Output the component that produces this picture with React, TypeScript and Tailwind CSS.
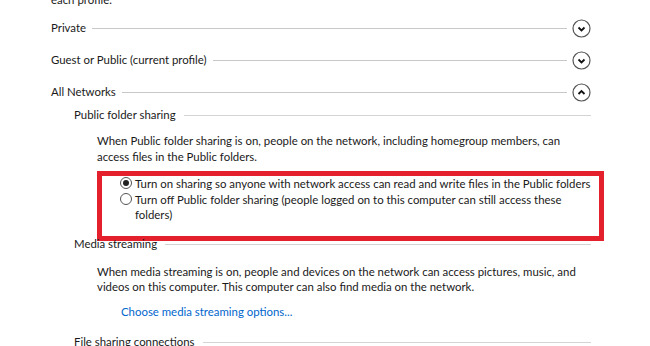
import React from 'react';

const font = { fontFamily: 'Lato, "Segoe UI", sans-serif' };

function Chevron({ up }: { up?: boolean }) {
  return (
    <svg width="19" height="19" viewBox="0 0 19 19" className="shrink-0">
      <circle cx="9.5" cy="9.5" r="8.5" fill="white" stroke="#555" strokeWidth="1.2" />
      {up ? (
        <path d="M6.5 11 L9.5 8 L12.5 11" fill="none" stroke="#111" strokeWidth="1.8" />
      ) : (
        <path d="M6.5 8.5 L9.5 11.5 L12.5 8.5" fill="none" stroke="#111" strokeWidth="1.8" />
      )}
    </svg>
  );
}

function ProfileHeader({ label, up }: { label: string; up?: boolean }) {
  return (
    <div className="flex items-center h-[32px]">
      <span>{label}</span>
      <div className="flex-1 h-px bg-[#c8c8c8] ml-[6px] mr-[5px]" />
      <Chevron up={up} />
    </div>
  );
}

function SubHeader({ label }: { label: string }) {
  return (
    <div className="flex items-center h-[24px] ml-[23px]">
      <span>{label}</span>
      <div className="flex-1 h-px bg-[#d4d4d4] ml-[8px]" />
    </div>
  );
}

function Radio({ checked }: { checked?: boolean }) {
  return (
    <span className="w-[12px] h-[12px] rounded-full border border-[#555] bg-white flex items-center justify-center shrink-0">
      {checked && <span className="w-[6px] h-[6px] rounded-full bg-[#222]" />}
    </span>
  );
}

export default function App() {
  return (
    <div className="w-[650px] h-[346px] overflow-hidden bg-white text-[11.4px] leading-[16px] text-[#1a1a1a] whitespace-nowrap" style={font}>
      <div className="pl-[51px] pr-[59px]">
        <div className="-mt-[8px] h-[20px]">each profile.</div>
        <ProfileHeader label="Private" />
        <ProfileHeader label="Guest or Public (current profile)" />
        <ProfileHeader label="All Networks" up />
        <div className="-mt-[5px]">
          <SubHeader label="Public folder sharing" />
          <div className="ml-[46px] mt-[6px]">
            <div>When Public folder sharing is on, people on the network, including homegroup members, can</div>
            <div>access files in the Public folders.</div>
          </div>
          <div className="ml-[46px] -mr-[13px] mt-[6px] h-[70px] border-[5px] border-[#e3202b] pl-[18px] leading-[15px]">
            <div className="flex items-center gap-[3px] h-[14px]">
              <Radio checked />
              <span>Turn on sharing so anyone with network access can read and write files in the Public folders</span>
            </div>
            <div className="flex items-start gap-[3px] mt-[2px]">
              <span className="mt-[1px]"><Radio /></span>
              <span>
                Turn off Public folder sharing (people logged on to this computer can still access these
                <br />
                folders)
              </span>
            </div>
          </div>
          <div className="-mt-[9px]">
            <SubHeader label="Media streaming" />
          </div>
          <div className="ml-[46px] mt-[8px] leading-[15px]">
            <div>When media streaming is on, people and devices on the network can access pictures, music, and</div>
            <div>videos on this computer. This computer can also find media on the network.</div>
          </div>
          <div className="ml-[70px] mt-[10px] text-[#0066cc]">Choose media streaming options...</div>
          <div className="mt-[10px]">
            <SubHeader label="File sharing connections" />
          </div>
        </div>
      </div>
    </div>
  );
}
